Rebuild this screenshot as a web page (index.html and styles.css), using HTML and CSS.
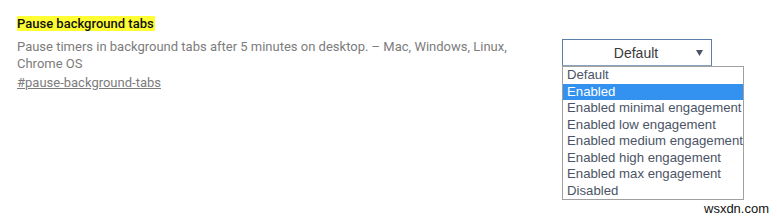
FILE: index.html
```html
<!DOCTYPE html>
<html>
<head>
<meta charset="utf-8">
<link rel="stylesheet" href="styles.css">
</head>
<body>
<div class="page">
  <div class="flag">
    <div class="info">
      <div class="title"><span class="hl">Pause background tabs</span></div>
      <div class="desc">Pause timers in background tabs after 5 minutes on desktop. – Mac, Windows, Linux, Chrome OS</div>
      <div class="link">#pause-background-tabs</div>
    </div>
    <div class="control">
      <div class="select">
        <span class="sel-text">Default</span>
        <svg class="arrow" width="7" height="6" viewBox="0 0 7 6"><path d="M0 0 H7 L3.5 6 Z" fill="#4a5568"/></svg>
      </div>
      <ul class="list">
        <li>Default</li>
        <li class="active">Enabled</li>
        <li>Enabled minimal engagement</li>
        <li>Enabled low engagement</li>
        <li>Enabled medium engagement</li>
        <li>Enabled high engagement</li>
        <li>Enabled max engagement</li>
        <li>Disabled</li>
      </ul>
    </div>
  </div>
  <div class="watermark">wsxdn.com</div>
</div>
</body>
</html>
```
FILE: styles.css
```css
html, body {
  margin: 0;
  padding: 0;
  background: #fff;
}
.page {
  width: 777px;
  height: 218px;
  position: relative;
  overflow: hidden;
}
.flag {
  display: flex;
  padding: 16px 0 0 17px;
}
.info {
  width: 520px;
  font-family: Roboto, "Noto Sans", sans-serif;
  font-size: 13px;
}
.title {
  line-height: 16px;
  font-weight: 500;
  color: #111;
}
.hl {
  background: #ffff33;
  padding-right: 1px;
}
.desc {
  color: #7c7c7c;
  line-height: 17px;
  margin-top: 6px;
}
.link {
  color: #7c7c7c;
  text-decoration: underline;
  line-height: 17px;
  margin-top: 2px;
}
.control {
  margin-left: 25px;
  margin-top: 23px;
  width: 183px;
  font-family: "Liberation Sans", Arial, sans-serif;
}
.select {
  width: 148px;
  height: 25px;
  border: 1px solid #5a7fa8;
  border-bottom-color: #8aa4c0;
  display: flex;
  align-items: center;
  position: relative;
  color: #3a3a3a;
  font-size: 14px;
}
.sel-text {
  flex: 1;
  text-align: center;
  padding-right: 2px;
}
.arrow {
  position: absolute;
  right: 8px;
  top: 10px;
}
.list {
  list-style: none;
  margin: 0;
  padding: 0;
  width: 180px;
  border: 1px solid #a0a0a0;
  font-size: 13px;
  color: #4b5466;
}
.list li {
  height: 16.5px;
  line-height: 16.5px;
  padding-left: 4px;
  white-space: nowrap;
  font-size: 13.2px;
}
.list li.active {
  background: #3392f0;
  color: #fff;
}
.watermark {
  position: absolute;
  left: 704px;
  top: 201px;
  font-family: "Liberation Sans", Arial, sans-serif;
  font-size: 13px;
  color: #111;
}
```
